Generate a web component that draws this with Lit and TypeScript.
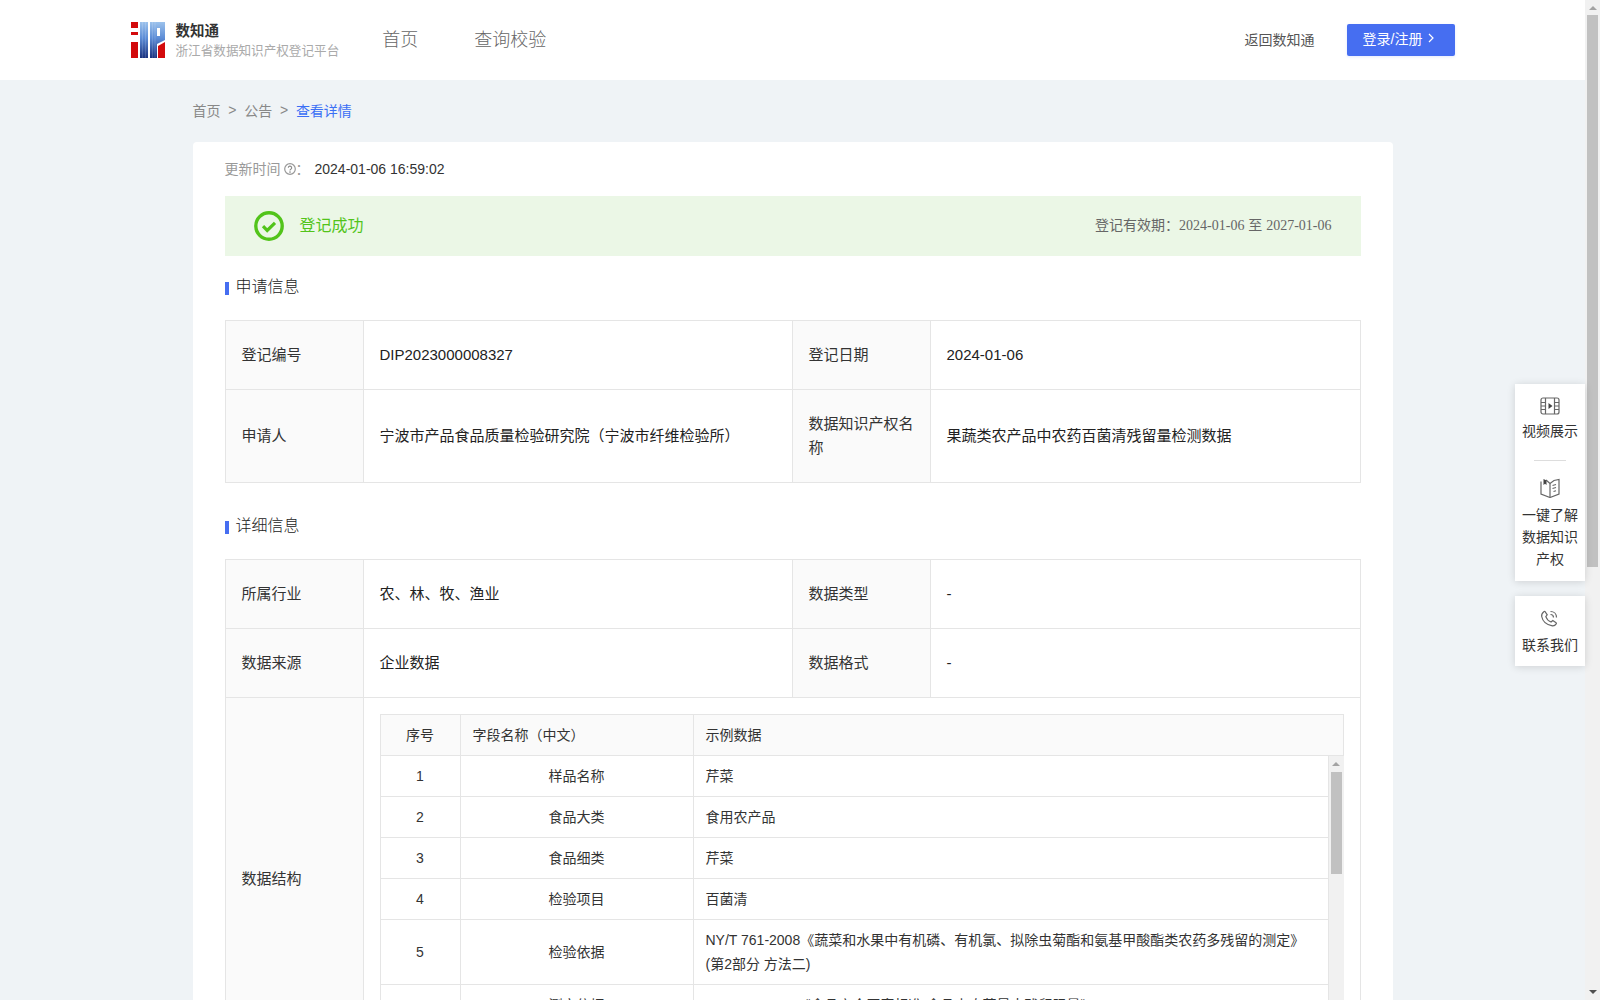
import { LitElement, html, css, svg } from 'lit';
import { customElement } from 'lit/decorators.js';

const infoRows = [
  { no: '1', name: '样品名称', sample: '芹菜' },
  { no: '2', name: '食品大类', sample: '食用农产品' },
  { no: '3', name: '食品细类', sample: '芹菜' },
  { no: '4', name: '检验项目', sample: '百菌清' },
  {
    no: '5',
    name: '检验依据',
    sample: 'NY/T 761-2008《蔬菜和水果中有机磷、有机氯、拟除虫菊酯和氨基甲酸酯类农药多残留的测定》(第2部分 方法二)',
  },
  { no: '6', name: '测定依据', sample: 'GB 2763-2021《食品安全国家标准 食品中农药最大残留限量》' },
];

const logo = svg`
  <defs>
    <linearGradient id="lg" x1="0" y1="0" x2="0" y2="1">
      <stop offset="0" stop-color="#9cc2ec" />
      <stop offset="0.45" stop-color="#5c8cd6" />
      <stop offset="1" stop-color="#1a327f" />
    </linearGradient>
  </defs>
  <path fill="#d30a0c" d="M0 0h7v6H0zM0 10h7v3H0zM0 20h7v16H0z" />
  <path fill="url(#lg)" d="M9 0h8v36H9zM19 0h15v18l-8 4v14h-7z" />
  <path fill="#fff" d="M26 6h3v8h-3z" />
  <path fill="#d30a0c" d="M27 24l7-4v16h-7z" />
  <path stroke="#fff" stroke-opacity=".25" stroke-width=".6" d="M11.500 0v36M14.500 0v36M21.500 0v36M24 0v36" />
`;

@customElement('app-root')
export class AppRoot extends LitElement {
  static styles = css`
    :host {
      display: block;
      position: relative;
      width: 1600px;
      height: 1000px;
      overflow: hidden;
      font-family: 'Liberation Sans', 'Noto Sans CJK SC', sans-serif;
      font-size: 14px;
      color: #333;
    }
    .shell {
      display: flex;
      height: 1000px;
    }
    .page {
      width: 1585px;
      background: #eff3f6;
      overflow: hidden;
    }
    .header {
      height: 80px;
      background: #fff;
    }
    .header-inner {
      width: 1324px;
      height: 80px;
      margin: 0 auto;
      display: flex;
      align-items: center;
    }
    .logo {
      width: 34px;
      height: 36px;
      flex: none;
    }
    .brand {
      margin-left: 11px;
      padding-top: 2px;
      line-height: 20px;
    }
    .brand-title {
      font-size: 14.5px;
      font-weight: 600;
      color: #333;
    }
    .brand-sub {
      font-size: 12.6px;
      color: #aaa;
      white-space: nowrap;
    }
    .nav {
      display: flex;
      gap: 56px;
      margin-left: 43px;
      padding-bottom: 4px;
      font-size: 18px;
      font-weight: 300;
      color: #666;
    }
    .header-right {
      margin-left: auto;
      display: flex;
      align-items: center;
      gap: 32px;
      color: #555;
    }
    .back {
      padding-bottom: 3px;
    }
    .login {
      width: 108px;
      height: 32px;
      box-sizing: border-box;
      padding: 0 0 4px 16px;
      display: flex;
      align-items: center;
      gap: 6px;
      background: #466ef1;
      color: #fff;
      border-radius: 2px;
      box-shadow: 0 1px 3px rgba(70, 110, 241, 0.15);
    }
    .main {
      width: 1200px;
      margin: 0 auto;
    }
    .crumbs {
      height: 59px;
      padding-bottom: 3px;
      display: flex;
      align-items: center;
      gap: 7.75px;
      color: #888;
    }
    .crumbs .current {
      color: #3b6ff5;
    }
    .card {
      background: #fff;
      border-radius: 4px;
      padding: 16px 32px 0;
      height: 900px;
    }
    .updated {
      display: flex;
      align-items: center;
      line-height: 22px;
      color: #999;
    }
    .updated svg {
      margin: 0 0 0 3px;
    }
    .updated .colon {
      width: 19px;
    }
    .updated .time {
      color: #333;
    }
    .banner {
      margin-top: 16px;
      height: 60px;
      box-sizing: border-box;
      padding: 0 29px 0 29px;
      display: flex;
      align-items: center;
      background: #ebf7e6;
    }
    .banner-text {
      margin: -4px 0 0 16px;
      font-size: 16px;
      color: #52c41a;
    }
    .validity {
      margin: -4px 0 0 auto;
      color: #666;
    }
    .validity .date {
      font-family: 'Liberation Serif', 'Noto Sans CJK SC', serif;
    }
    .section {
      display: flex;
      align-items: center;
      line-height: 22px;
      font-size: 16px;
      font-weight: 300;
      color: #222;
    }
    .section::before {
      content: '';
      width: 4px;
      height: 13px;
      margin: 2px 7px 0 0;
      background: #466ef1;
    }
    .s1 {
      margin: 20px 0 22px;
    }
    .s2 {
      margin: 32px 0 22px;
    }
    table {
      border-collapse: collapse;
      table-layout: fixed;
    }
    .form {
      width: 1135px;
    }
    .form > colgroup > .lab {
      width: 138px;
    }
    .form > colgroup > .v1 {
      width: 429px;
    }
    .form > colgroup > .v2 {
      width: 430px;
    }
    .form > tbody > tr > td {
      border: 1px solid #e5e5e5;
      padding: 22px 16px;
      line-height: 24px;
      font-size: 15px;
      color: #222;
    }
    .form > tbody > tr > td.label {
      background: #fafafa;
      color: #333;
    }
    .form > tbody > tr > td.struct {
      padding: 16px;
      font-size: 14px;
    }
    .inner-wrap {
      width: 964px;
    }
    .inner td,
    .inner th {
      box-sizing: border-box;
      border: 1px solid #e5e5e5;
      padding: 8px 12px;
      line-height: 24px;
      font-weight: 400;
      text-align: left;
      color: #333;
    }
    .inner th {
      background: #fafafa;
    }
    .inner .no {
      width: 80px;
      text-align: center;
    }
    .inner .name {
      width: 233px;
    }
    .inner td.name {
      text-align: center;
    }
    .inner-head {
      width: 963px;
    }
    .inner-head .sample {
      width: 650px;
    }
    .inner-scroll {
      display: flex;
      height: 288px;
      overflow: hidden;
    }
    .inner-body {
      width: 948px;
      flex: none;
      align-self: flex-start;
      margin-top: -1px;
    }
    .inner-body .sample {
      width: 635px;
    }
    .inner-bar {
      width: 16px;
      flex: none;
      background: #f1f1f1;
    }
    .arrow {
      width: 0;
      height: 0;
      border-left: 4px solid transparent;
      border-right: 4px solid transparent;
    }
    .inner-bar .arrow {
      margin: 6px 0 0 3px;
      border-bottom: 4px solid #a3a3a3;
    }
    .inner-bar .thumb {
      width: 11px;
      height: 102px;
      margin: 6px 0 0 2px;
      background: #c1c1c1;
    }
    .page-bar {
      width: 15px;
      height: 1000px;
      background: #f1f1f1;
      display: flex;
      flex-direction: column;
      align-items: center;
    }
    .page-bar .arrow.up {
      margin-top: 6px;
      border-bottom: 4px solid #a3a3a3;
    }
    .page-bar .thumb {
      width: 11px;
      height: 552px;
      margin-top: 5px;
      background: #c1c1c1;
    }
    .page-bar .arrow.down {
      margin-top: auto;
      margin-bottom: 6px;
      border-top: 4px solid #505050;
    }
    .float {
      position: absolute;
      top: 384px;
      right: 15px;
      width: 70px;
      display: flex;
      flex-direction: column;
      gap: 15px;
    }
    .float-box {
      background: #fff;
      box-shadow: 0 1px 8px rgba(0, 0, 0, 0.14);
      display: flex;
      flex-direction: column;
      align-items: center;
      text-align: center;
      line-height: 22px;
      padding: 13px 0 11px;
      color: #333;
    }
    .float-text {
      width: 56px;
      margin-top: 5px;
    }
    .float-text.book {
      margin-top: 6px;
    }
    .float-box hr {
      width: 32px;
      height: 1px;
      margin: 18px 0 17px;
      border: 0;
      background: #ddd;
    }
    .float-box.contact {
      padding: 14px 0 10px;
    }
    .float-box.contact .float-text {
      margin-top: 6px;
    }
    .ico {
      fill: none;
      stroke: #666;
      stroke-width: 1.2;
    }
  `;

  render() {
    return html`
      <div class="shell">
        <div class="page">
          ${this.renderHeader()}
          <div class="main">
            <div class="crumbs">
              <span>首页</span><span>&gt;</span><span>公告</span><span>&gt;</span>
              <span class="current">查看详情</span>
            </div>
            <div class="card">
              <div class="updated">
                <span>更新时间</span>
                <svg width="12" height="12" viewBox="0 0 12 12" fill="none">
                  <circle cx="6" cy="6" r="5.300" stroke="#999" stroke-width="1.200" />
                  <path d="M4.300 4.800a1.700 1.700 0 1 1 2.500 1.500c-.5.300-.8.600-.8 1.200" stroke="#888" stroke-width="1.100" />
                  <circle cx="6" cy="9.100" r=".8" fill="#888" />
                </svg>
                <span class="colon">：</span>
                <span class="time">2024-01-06 16:59:02</span>
              </div>
              <div class="banner">
                <svg width="30" height="30" viewBox="0 0 30 30" fill="none">
                  <circle cx="15" cy="15" r="13.200" stroke="#52c41a" stroke-width="3.400" />
                  <path d="M9 15.200l4.200 4.200 7.800-7.600" stroke="#52c41a" stroke-width="3.200" />
                </svg>
                <span class="banner-text">登记成功</span>
                <span class="validity">登记有效期：<span class="date">2024-01-06</span> 至 <span class="date">2027-01-06</span></span>
              </div>
              <div class="section s1">申请信息</div>
              <table class="form">
                ${this.renderCols()}
                <tbody>
                  <tr>
                    <td class="label">登记编号</td>
                    <td>DIP2023000008327</td>
                    <td class="label">登记日期</td>
                    <td>2024-01-06</td>
                  </tr>
                  <tr>
                    <td class="label">申请人</td>
                    <td>宁波市产品食品质量检验研究院（宁波市纤维检验所）</td>
                    <td class="label">数据知识产权名称</td>
                    <td>果蔬类农产品中农药百菌清残留量检测数据</td>
                  </tr>
                </tbody>
              </table>
              <div class="section s2">详细信息</div>
              <table class="form">
                ${this.renderCols()}
                <tbody>
                  <tr>
                    <td class="label">所属行业</td>
                    <td>农、林、牧、渔业</td>
                    <td class="label">数据类型</td>
                    <td>-</td>
                  </tr>
                  <tr>
                    <td class="label">数据来源</td>
                    <td>企业数据</td>
                    <td class="label">数据格式</td>
                    <td>-</td>
                  </tr>
                  <tr>
                    <td class="label">数据结构</td>
                    <td class="struct" colspan="3">${this.renderStructure()}</td>
                  </tr>
                </tbody>
              </table>
            </div>
          </div>
        </div>
        <div class="page-bar">
          <div class="arrow up"></div>
          <div class="thumb"></div>
          <div class="arrow down"></div>
        </div>
      </div>
      ${this.renderFloat()}
    `;
  }

  renderHeader() {
    return html`
      <div class="header">
        <div class="header-inner">
          <svg class="logo" viewBox="0 0 34 36">${logo}</svg>
          <div class="brand">
            <div class="brand-title">数知通</div>
            <div class="brand-sub">浙江省数据知识产权登记平台</div>
          </div>
          <div class="nav"><span>首页</span><span>查询校验</span></div>
          <div class="header-right">
            <span class="back">返回数知通</span>
            <div class="login">
              <span>登录/注册</span>
              <svg width="6" height="10" viewBox="0 0 6 10" fill="none">
                <path d="M1 1l4 4-4 4" stroke="#fff" stroke-width="1.200" />
              </svg>
            </div>
          </div>
        </div>
      </div>
    `;
  }

  renderCols() {
    return html`
      <colgroup>
        <col class="lab" />
        <col class="v1" />
        <col class="lab" />
        <col class="v2" />
      </colgroup>
    `;
  }

  renderStructure() {
    return html`
      <div class="inner-wrap">
        <table class="inner inner-head">
          <thead>
            <tr>
              <th class="no">序号</th>
              <th class="name">字段名称（中文）</th>
              <th class="sample">示例数据</th>
            </tr>
          </thead>
        </table>
        <div class="inner-scroll">
          <table class="inner inner-body">
            <tbody>
              ${infoRows.map((row) => html`
                <tr>
                  <td class="no">${row.no}</td>
                  <td class="name">${row.name}</td>
                  <td class="sample">${row.sample}</td>
                </tr>
              `)}
            </tbody>
          </table>
          <div class="inner-bar">
            <div class="arrow"></div>
            <div class="thumb"></div>
          </div>
        </div>
      </div>
    `;
  }

  renderFloat() {
    return html`
      <div class="float">
        <div class="float-box">
          <svg class="ico" width="20" height="18" viewBox="0 0 20 18">
            <rect x="1" y="1" width="18" height="16" rx="2" />
            <path d="M5.500 1v16M14.500 1v16M1 5.500h4.500M1 9h4.500M1 12.500h4.500M14.500 5.500H19M14.500 9H19M14.500 12.500H19" />
            <path d="M8.500 6l4 3-4 3z" fill="#444" stroke="none" />
          </svg>
          <div class="float-text">视频展示</div>
          <hr />
          <svg class="ico" width="20" height="20" viewBox="0 0 20 20">
            <path d="M1 3.500v12.500l9 3.500 9-3.500V1.500l-5 1-4 3-4-3.500" />
            <path d="M10 5.500v13.500" />
            <path d="M3.500 1v6l1.500-1.200L6.500 7V2.500z" fill="#444" stroke="none" />
            <path d="M12.500 7.500l3.500-1M12.500 10.500l3.500-1M13.500 13.500l2.500-.8" />
          </svg>
          <div class="float-text book">一键了解数据知识产权</div>
        </div>
        <div class="float-box contact">
          <svg class="ico" width="20" height="18" viewBox="0 0 20 18">
            <path d="M5 1.500l2.200 3.300-1.400 1.800c.8 2.300 2.800 4.400 5.200 5.400l1.800-1.400 3.300 2.100c.4.300.4.800.1 1.200-1 1.500-2.800 2.300-4.500 1.800C6 14.500 2.500 10.500 1.700 6.500 1.400 4.700 2.200 2.900 3.800 1.700c.4-.3.900-.3 1.200-.2z" />
            <path d="M10.500 1.500c3.500 0 6 2.500 6 6M10.500 4.500c1.800 0 3 1.200 3 3" />
          </svg>
          <div class="float-text">联系我们</div>
        </div>
      </div>
    `;
  }
}
